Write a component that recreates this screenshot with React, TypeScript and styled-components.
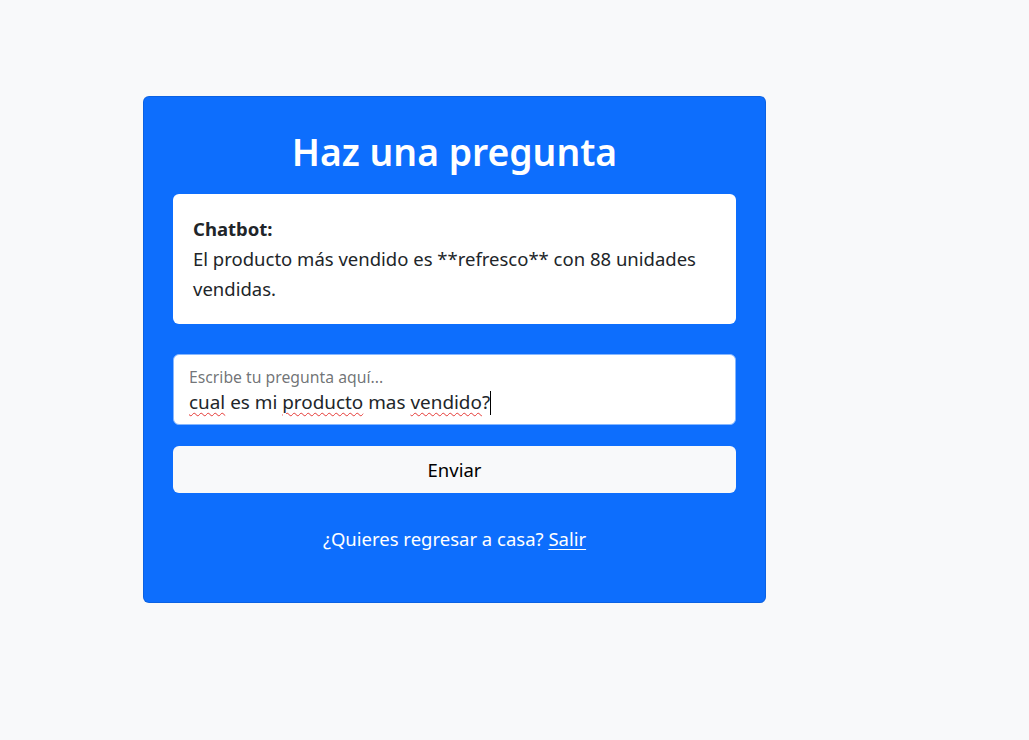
import React from "react";
import styled, { createGlobalStyle } from "styled-components";

const Global = createGlobalStyle`
  html, body { margin: 0; padding: 0; }
  body {
    background: #f8f9fa;
    font-family: "Noto Sans", "Open Sans", sans-serif;
    color: #212529;
  }
`;

const Page = styled.div`
  width: 1029px;
  height: 740px;
  padding: 96px 0 0 143px;
  box-sizing: border-box;
`;

const Card = styled.section`
  width: 623px;
  height: 507px;
  box-sizing: border-box;
  background: #0d6efd;
  border: 1px solid rgba(0, 0, 0, 0.1);
  border-radius: 6px;
  padding: 29px 29px;
  display: flex;
  flex-direction: column;
`;

const Title = styled.h1`
  margin: 3px 0 20px;
  font-size: 37.3px;
  line-height: 45px;
  font-weight: 600;
  color: #fff;
  text-align: center;
`;

const ChatBox = styled.div`
  background: #fff;
  border-radius: 6px;
  padding: 20px;
  font-size: 18.5px;
  line-height: 30px;
  color: #212529;
`;

const Speaker = styled.strong`
  display: block;
  font-weight: 700;
`;

const Field = styled.div`
  margin-top: 30px;
  height: 71px;
  box-sizing: border-box;
  background: #fff;
  border: 1px solid #86b7fe;
  border-radius: 6px;
  padding: 10px 15px 0;
  display: flex;
  flex-direction: column;
`;

const FieldLabel = styled.label`
  font-size: 15.75px;
  line-height: 24px;
  color: rgba(33, 37, 41, 0.65);
`;

const FieldText = styled.div`
  font-size: 18.9px;
  line-height: 26px;
  color: #212529;
  white-space: pre;
`;

const Misspelled = styled.span`
  text-decoration: underline wavy #e53935;
  text-decoration-thickness: 1px;
  text-underline-offset: 3px;
`;

const Caret = styled.span`
  display: inline-block;
  width: 1px;
  height: 24px;
  background: #000;
  vertical-align: -6px;
`;

const SendButton = styled.button`
  margin-top: 21px;
  height: 47px;
  border: 0;
  border-radius: 6px;
  background: #f8f9fa;
  color: #000;
  font-family: inherit;
  font-size: 18.5px;
  cursor: pointer;
`;

const Footer = styled.p`
  margin: 32px 0 0;
  text-align: center;
  color: #fff;
  font-size: 18.5px;
  line-height: 28px;
`;

const FooterLink = styled.a`
  color: #fff;
  text-decoration: underline;
  text-underline-offset: 3px;
`;

export default function App() {
  return (
    <>
      <Global />
      <Page>
        <Card>
          <Title>Haz una pregunta</Title>
          <ChatBox>
            <Speaker>Chatbot:</Speaker>
            El producto más vendido es **refresco** con 88 unidades vendidas.
          </ChatBox>
          <Field>
            <FieldLabel>Escribe tu pregunta aquí...</FieldLabel>
            <FieldText>
              <Misspelled>cual</Misspelled> es mi <Misspelled>producto</Misspelled> mas{" "}
              <Misspelled>vendido</Misspelled>?<Caret />
            </FieldText>
          </Field>
          <SendButton type="button">Enviar</SendButton>
          <Footer>
            ¿Quieres regresar a casa? <FooterLink href="#">Salir</FooterLink>
          </Footer>
        </Card>
      </Page>
    </>
  );
}
